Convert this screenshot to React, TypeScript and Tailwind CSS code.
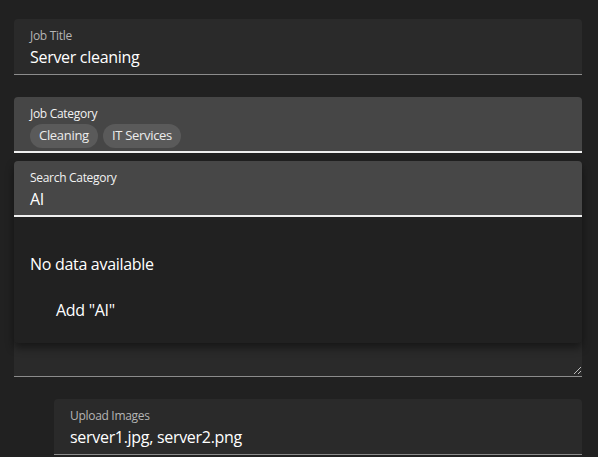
import React from 'react'

const font = { fontFamily: '"Open Sans", "Noto Sans", sans-serif' }

function Chip({ label }: { label: string }) {
  return (
    <span className="inline-flex h-6 items-center rounded-full bg-[#5a5a5a] px-[9px] text-[13px] text-[#ececec]">
      {label}
    </span>
  )
}

function ResizeHandle() {
  return (
    <svg width="8" height="8" viewBox="0 0 8 8" className="absolute bottom-[2px] right-[1px]">
      <path d="M1 8 L8 1 M5 8 L8 5" stroke="#bdbdbd" strokeWidth="1" />
    </svg>
  )
}

export default function App() {
  return (
    <div className="min-h-[457px] w-[598px] overflow-hidden bg-[#212121] tracking-[-0.3px] text-white" style={font}>
      <div className="flex w-[582px] flex-col pl-[14px] pt-[19px]">
        {/* Job title */}
        <div className="h-[56px] rounded-t border-b border-[#8c8c8c] bg-[#2a2a2a] px-4 pt-[9px]">
          <div className="text-[12px] leading-4 text-[#b5b5b5]">Job Title</div>
          <div className="mt-[1px] text-[16px] leading-6 text-white">Server cleaning</div>
        </div>

        {/* Job category with open menu */}
        <div className="relative mt-[22px]">
          <div className="h-[56px] rounded-t border-b-2 border-[#f0f0f0] bg-[#464646] px-4 pt-[9px]">
            <div className="text-[12px] leading-4 text-[#f2f2f2]">Job Category</div>
            <div className="mt-[2px] flex gap-[5px]">
              <Chip label="Cleaning" />
              <Chip label="IT Services" />
            </div>
          </div>

          <div className="absolute left-0 right-0 top-[64px] z-10 h-[182px] rounded bg-[#212121] shadow-[0_5px_8px_rgba(0,0,0,0.45)]">
            <div className="h-[56px] rounded-t border-b-2 border-[#f0f0f0] bg-[#474747] px-4 pt-[9px]">
              <div className="text-[12px] leading-4 text-[#f2f2f2]">Search Category</div>
              <div className="mt-[1px] text-[16px] leading-6 text-white">AI</div>
            </div>
            <div className="px-4 pt-[35px] text-[16px] leading-6 text-white">No data available</div>
            <div className="pl-[42px] pt-[22px] text-[16px] leading-6 text-white">Add "AI"</div>
          </div>
        </div>

        {/* Description textarea (under menu) */}
        <div className="relative mt-[22px] h-[202px] rounded-t border-b border-[#8c8c8c] bg-[#2a2a2a]">
          <ResizeHandle />
        </div>

        {/* Upload images */}
        <div className="ml-[40px] mt-[22px] h-[56px] rounded-t border-b border-[#8c8c8c] bg-[#2a2a2a] px-4 pt-[9px]">
          <div className="text-[12px] leading-4 text-[#b5b5b5]">Upload Images</div>
          <div className="mt-[1px] text-[16px] leading-6 text-white">server1.jpg, server2.png</div>
        </div>
      </div>
    </div>
  )
}
